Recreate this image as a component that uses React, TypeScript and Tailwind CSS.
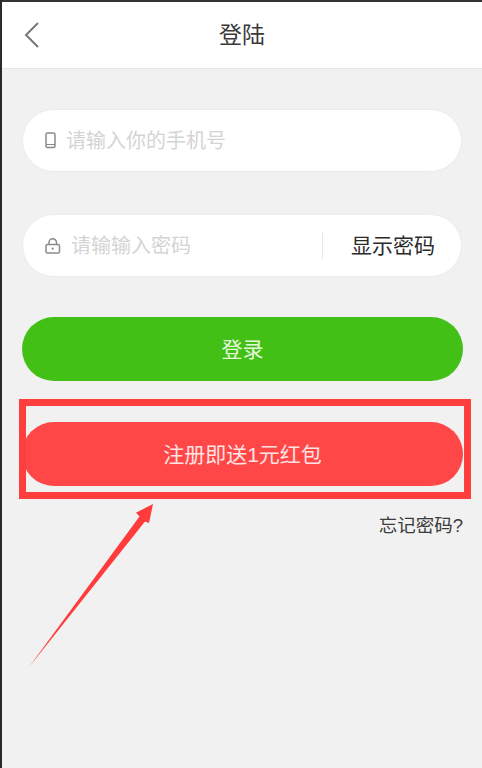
const cjk = "font-['Liberation_Sans','Noto_Sans_CJK_SC',sans-serif]";

export default function App() {
  return (
    <div className={`relative h-[768px] w-[482px] overflow-hidden bg-[#f1f1f1] border-l-2 border-[#2a2a2a] ${cjk}`}>
      <div className="h-[2px] bg-[#333333]" />
      <header className="relative flex h-[67px] items-center justify-center bg-white border-b border-[#e6e6e6]">
        <svg className="absolute left-[22px] top-[19px]" width="16" height="28" viewBox="0 0 16 28" fill="none">
          <path d="M14 2 L2 14 L14 26" stroke="#777777" strokeWidth="2" />
        </svg>
        <h1 className="pt-[1px] text-[23px] leading-none font-normal text-[#3a3a3a]">登陆</h1>
      </header>

      <main className="flex flex-col px-[21px] pt-[40px]">
        <div className="flex h-[63px] w-[440px] -ml-px items-center rounded-full bg-white border border-[#ebebeb] pl-[22px]">
          <svg width="12" height="17" viewBox="0 0 12 17" fill="none">
            <rect x="1" y="1" width="9" height="14.5" rx="1.5" stroke="#8a8a8a" strokeWidth="1.5" />
            <path d="M1 12.5 H10" stroke="#8a8a8a" strokeWidth="1" />
          </svg>
          <span className="ml-[9px] text-[20px] leading-none text-[#d4d4d4]">请输入你的手机号</span>
        </div>

        <div className="mt-[42px] flex h-[63px] w-[440px] -ml-px items-center rounded-full bg-white border border-[#ebebeb] pl-[22px]">
          <svg width="16" height="16" viewBox="0 0 16 16" fill="none">
            <rect x="1" y="6.5" width="13.5" height="8.5" rx="1.5" stroke="#8a8a8a" strokeWidth="1.5" />
            <path d="M4 6.5 V4.5 A3.7 3.7 0 0 1 11.5 4.5 V6.5" stroke="#8a8a8a" strokeWidth="1.5" />
            <circle cx="7.7" cy="10.7" r="1.1" fill="#8a8a8a" />
          </svg>
          <span className="ml-[10px] text-[20px] leading-none text-[#d4d4d4]">请输输入密码</span>
          <div className="ml-auto flex h-[26px] w-[139px] items-center border-l border-[#e8e8e8] pl-[28px]">
            <span className="text-[21px] leading-none text-[#2b2b2b]">显示密码</span>
          </div>
        </div>

        <button className="mt-[40px] flex h-[64px] w-[441px] -ml-px items-center justify-center rounded-full bg-[#43c016] text-[21px] leading-none text-[#e6f7de]">
          登录
        </button>

        <button className="mt-[41px] flex h-[64px] w-[441px] -ml-px items-center justify-center rounded-full bg-[#ff4747] text-[21px] leading-none text-[#ffe3e3]">
          注册即送1元红包
        </button>

        <a className="mt-[31px] self-end mr-[-2px] text-[18.5px] leading-none text-[#3c3c3c]">忘记密码?</a>
      </main>

      {/* Annotation overlays */}
      <div className="absolute left-[17px] top-[399px] h-[100px] w-[452px] border-[7px] border-[#ff3e3e]" />
      <svg className="absolute left-[-2px] top-0" width="482" height="768" viewBox="0 0 482 768" fill="none">
        <path d="M153 504 L136 512.7 L139.5 516.5 L29 667 L145 521.5 L149 523 Z" fill="#ff3b3b" />
      </svg>
    </div>
  );
}
